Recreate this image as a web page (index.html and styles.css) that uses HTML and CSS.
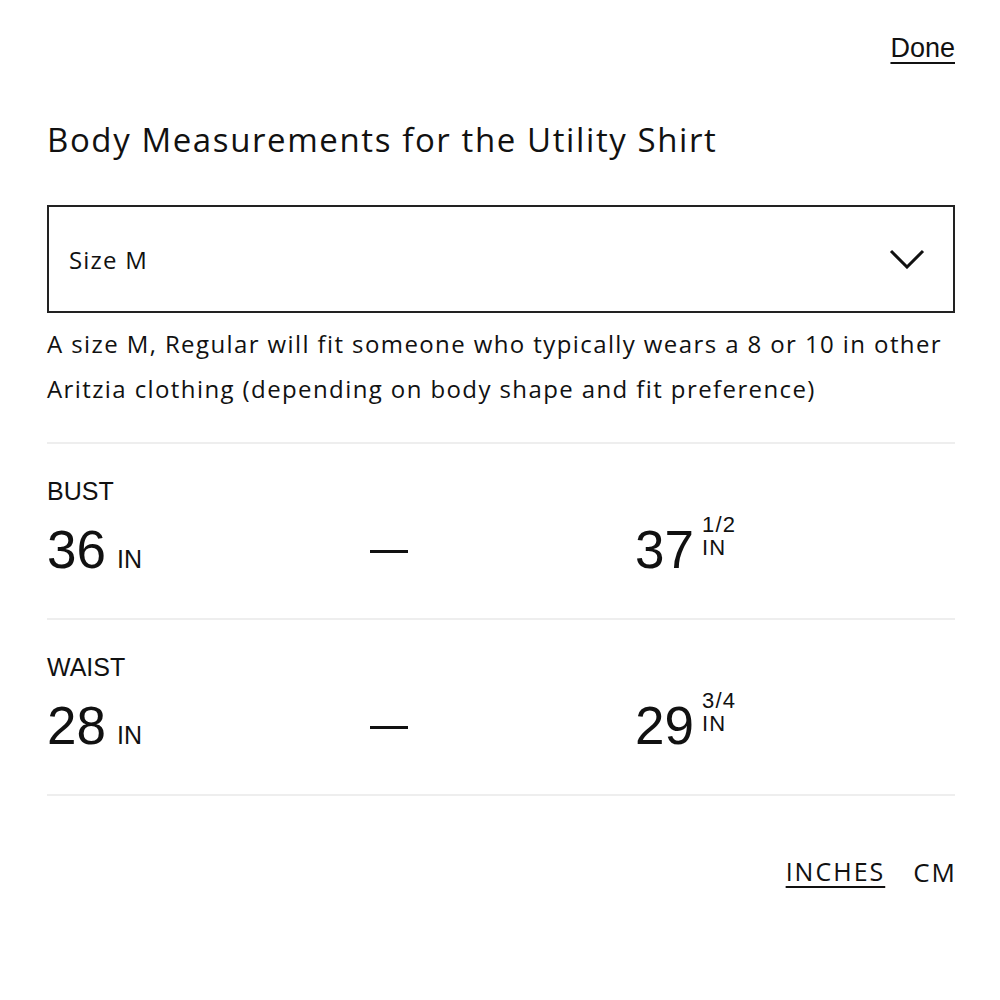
FILE: index.html
```html
<!DOCTYPE html>
<html lang="en">
<head>
    <meta charset="UTF-8">
    <meta name="viewport" content="width=device-width, initial-scale=1.0">
    <title>Size Guide</title>
    <link rel="stylesheet" href="styles.css">
</head>
<body>
    <div class="sheet">
        <div class="topbar">
            <a href="#" class="done">Done</a>
        </div>
        <h1>Body Measurements for the Utility Shirt</h1>
        <div class="size-select">
            <span>Size M</span>
            <svg class="chevron" width="36" height="20" viewBox="0 0 36 20">
                <path d="M2 2 L18 18 L34 2" fill="none" stroke="#111" stroke-width="3"/>
            </svg>
        </div>
        <p class="fit-note">A size M, Regular will fit someone who typically wears a 8 or 10 in other Aritzia clothing (depending on body shape and fit preference)</p>

        <div class="measures">
            <div class="measure">
                <div class="label">BUST</div>
                <div class="range">
                    <div class="value">36 <span class="unit">IN</span></div>
                    <div class="dash"></div>
                    <div class="value">37 <span class="frac"><span>1/2</span><span>IN</span></span></div>
                </div>
            </div>
            <div class="measure">
                <div class="label">WAIST</div>
                <div class="range">
                    <div class="value">28 <span class="unit">IN</span></div>
                    <div class="dash"></div>
                    <div class="value">29 <span class="frac"><span>3/4</span><span>IN</span></span></div>
                </div>
            </div>
        </div>

        <div class="units">
            <a href="#" class="active">INCHES</a>
            <a href="#">CM</a>
        </div>
    </div>
</body>
</html>
```

FILE: styles.css
```css
body { margin: 0; background: #fff; color: #111; font-family: "Open Sans", "Liberation Sans", sans-serif; }
.sheet { padding: 32px 45px 60px 47px; }
.topbar { display: flex; justify-content: flex-end; }
.done { font-family: "Liberation Sans", Arial, sans-serif; font-size: 27px; line-height: 32px; color: #111; text-decoration: underline; text-underline-offset: 5px; text-decoration-thickness: 2px; }
h1 { font-size: 33px; line-height: 40px; font-weight: 400; letter-spacing: 1.6px; margin: 56px 0 45px; }
.size-select { height: 104px; border: 2px solid #222; display: flex; align-items: center; justify-content: space-between; padding: 0 28px 0 20px; font-size: 24px; letter-spacing: 1.2px; }
.chevron { display: block; }
.fit-note { font-size: 24px; line-height: 45px; letter-spacing: 1.4px; margin: 8px 0 31px; }
.measures { border-bottom: 2px solid #eee; }
.measure { border-top: 2px solid #eee; padding: 32px 0 38px; }
.label { font-family: "Liberation Sans", Arial, sans-serif; font-size: 25px; line-height: 30px; }
.range { display: grid; grid-template-columns: 323px 265px auto; align-items: center; margin-top: 14px; }
.value { font-family: "Liberation Sans", Arial, sans-serif; font-size: 53px; line-height: 60px; height: 60px; display: flex; align-items: baseline; gap: 11px; }
.unit { font-size: 25px; }
/* stacked fraction over the unit */
.frac { display: inline-flex; flex-direction: column; font-size: 22px; line-height: 23px; letter-spacing: 1.2px; align-self: flex-end; margin: 0 0 21px -3px; }
.dash { width: 38px; height: 3px; background: #111; margin-top: 2px; }
.units { display: flex; justify-content: flex-end; gap: 28px; margin-top: 58px; }
.units a { font-size: 25px; color: #111; text-decoration: none; letter-spacing: 2px; }
.units a:last-child { font-size: 26px; margin-right: -2px; }
.units a.active { text-decoration: underline; text-underline-offset: 5px; text-decoration-thickness: 2px; }
```
